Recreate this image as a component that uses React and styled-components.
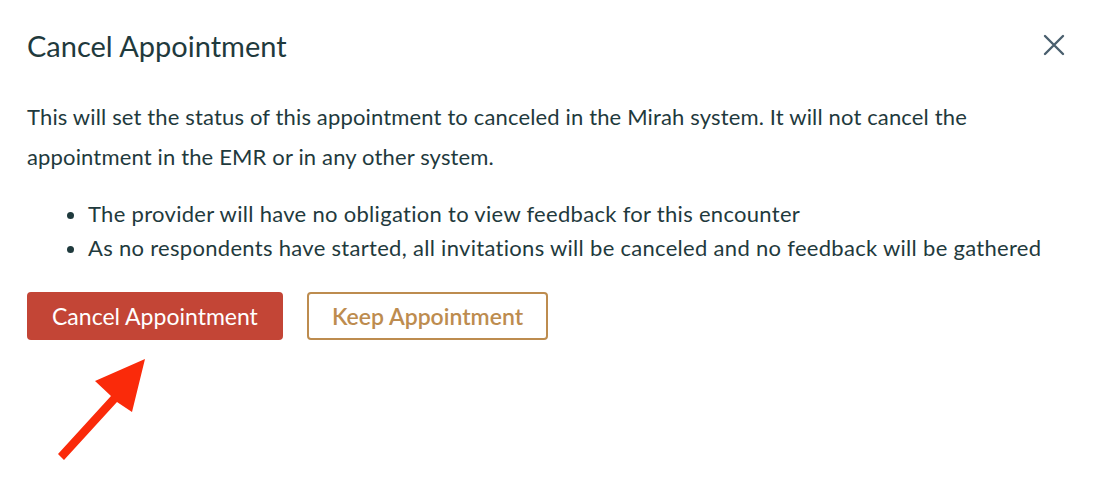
import React from 'react';
import styled, { createGlobalStyle } from 'styled-components';

const GlobalStyle = createGlobalStyle`
  html, body {
    margin: 0;
    padding: 0;
    background: #ffffff;
  }
  body {
    font-family: Lato, 'Noto Sans', sans-serif;
    color: #1f3a3d;
  }
`;

const Dialog = styled.div`
  position: relative;
  width: 1108px;
  height: 502px;
  box-sizing: border-box;
  padding: 25px 39px 0 27px;
`;

const Header = styled.div`
  display: flex;
  align-items: center;
  justify-content: space-between;
  height: 40px;
`;

const Title = styled.h2`
  margin: 0;
  font-size: 29px;
  font-weight: 400;
  color: #1f3a3d;
`;

const CloseButton = styled.button`
  background: none;
  border: none;
  padding: 0;
  width: 30px;
  height: 30px;
  display: flex;
  align-items: center;
  justify-content: center;
  cursor: pointer;
`;

const Body = styled.p`
  margin: 32px 0 0;
  font-size: 22px;
  line-height: 40px;
  letter-spacing: 0.15px;
  max-width: 960px;
`;

const BulletList = styled.ul`
  margin: 20px 0 0;
  padding-left: 61px;
  font-size: 22px;
  line-height: 34px;
  letter-spacing: 0.3px;
`;

const Actions = styled.div`
  display: flex;
  gap: 24px;
  margin-top: 27px;
`;

const Button = styled.button`
  height: 48px;
  box-sizing: border-box;
  padding: 0 23px;
  border-radius: 4px;
  font-family: Lato, 'Noto Sans', sans-serif;
  font-size: 23px;
  cursor: pointer;
  border: 2px solid ${(p) => (p.$primary ? '#c34536' : '#bd8c4f')};
  background: ${(p) => (p.$primary ? '#c34536' : '#ffffff')};
  color: ${(p) => (p.$primary ? '#ffffff' : '#bd8c4f')};
  font-weight: ${(p) => (p.$primary ? 400 : 600)};
`;

const Arrow = styled.svg`
  position: absolute;
  left: 50px;
  top: 350px;
`;

export default function App() {
  return (
    <>
      <GlobalStyle />
      <Dialog>
        <Header>
          <Title>Cancel Appointment</Title>
          <CloseButton aria-label='close'>
            <svg width='22' height='22' viewBox='0 0 22 22'>
              <path d='M2 2 L20 20 M20 2 L2 20' stroke='#4a5f6e' strokeWidth='2.4' strokeLinecap='round' />
            </svg>
          </CloseButton>
        </Header>
        <Body>
          This will set the status of this appointment to canceled in the Mirah system. It will not cancel the
          appointment in the EMR or in any other system.
        </Body>
        <BulletList>
          <li>The provider will have no obligation to view feedback for this encounter</li>
          <li>As no respondents have started, all invitations will be canceled and no feedback will be gathered</li>
        </BulletList>
        <Actions>
          <Button $primary>Cancel Appointment</Button>
          <Button>Keep Appointment</Button>
        </Actions>
        <Arrow width='110' height='120' viewBox='0 0 110 120'>
          <polygon points='95,9 45,31 61,46 8,104 14,110 67,52 82,62' fill='#fa2a0a' />
        </Arrow>
      </Dialog>
    </>
  );
}
